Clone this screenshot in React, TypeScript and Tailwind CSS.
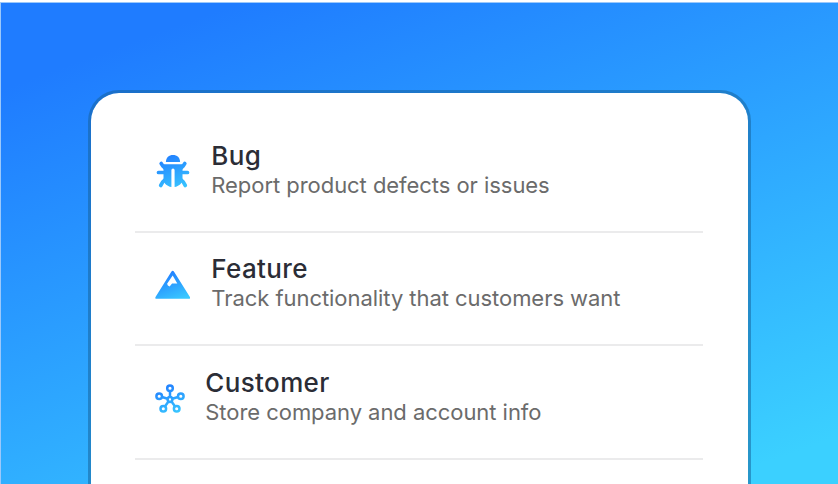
import type { ReactNode } from "react";

function BugIcon() {
  return (
    <svg width="34" height="36" viewBox="0 0 34 36" className="block shrink-0">
      <defs>
        <linearGradient id="bug" gradientUnits="userSpaceOnUse" x1="10" y1="2" x2="24" y2="38">
          <stop offset="0" stopColor="#217fff" />
          <stop offset="1" stopColor="#39c8ff" />
        </linearGradient>
      </defs>
      <path d="M9.900 9C10 4.500 13 2 17 2s7 2.500 7.100 7z" fill="url(#bug)" />
      <path d="M7.500 11.200h19V26.500c-.3 3.800-3.600 6.900-7.900 7.500V17.200q0-1.600-1.600-1.600t-1.600 1.600V34C11.100 33.400 7.800 30.300 7.500 26.500z" fill="url(#bug)" />
      <path d="M9 15 7 13.200 5.200 10.500M25 15 27 13.200l1.800-2.700M10 19.500H2.500M24 19.500h7.500M9.500 26.500l-2.700 2.300-2.100 3.700M24.500 26.500l2.700 2.300 2.100 3.700" fill="none" stroke="url(#bug)" strokeWidth="3.700" strokeLinecap="round" strokeLinejoin="round" />
    </svg>
  );
}

function FeatureIcon() {
  return (
    <svg width="36" height="30" viewBox="0 0 36 30" className="block shrink-0">
      <defs>
        <linearGradient id="feature" gradientUnits="userSpaceOnUse" x1="13" y1="2" x2="24" y2="30">
          <stop offset="0" stopColor="#217fff" />
          <stop offset="1" stopColor="#39c8ff" />
        </linearGradient>
      </defs>
      <path fillRule="evenodd" d="M16.500 1.400q1.200-1.400 2.400 0L34.900 27q.6 1.800-.9 1.800H1.400q-1.500 0-.9-1.800zM17.700 5.500l-5.600 8.300q.3 2.200 2.500 2.800l2.500-3.100h5.200z" fill="url(#feature)" />
    </svg>
  );
}

function CustomerIcon() {
  return (
    <svg width="30" height="30" viewBox="0 0 30 30" className="block shrink-0">
      <defs>
        <linearGradient id="customer" gradientUnits="userSpaceOnUse" x1="10" y1="1" x2="21" y2="30">
          <stop offset="0" stopColor="#217fff" />
          <stop offset="1" stopColor="#39c8ff" />
        </linearGradient>
      </defs>
      <g fill="none" stroke="url(#customer)" strokeWidth="2.500">
        <circle cx="15" cy="4.200" r="2.800" />
        <circle cx="4.200" cy="12.200" r="2.800" />
        <circle cx="25.800" cy="12.200" r="2.800" />
        <circle cx="8.300" cy="24.800" r="2.800" />
        <circle cx="21.700" cy="24.800" r="2.800" />
        <circle cx="15" cy="15.500" r="2.400" />
        <path d="M15.010 7 15 13.200M6.900 13 12.700 14.700M23.100 13 17.300 14.700M9.900 22.400 13.500 17.500M20.100 22.400 16.500 17.500" />
      </g>
    </svg>
  );
}

function Row({ icon, title, text }: { icon: ReactNode; title: string; text: string }) {
  return (
    <li className="h-[113.5px] border-b-2 border-[#ebebec] pl-5">
      <div className="flex items-start gap-[20.3px]">
        {icon}
        <div className="pt-[21.5px]">
          <h2 className="text-[26px] leading-[30px] font-medium tracking-[0.37px] text-[#2b2d36]">{title}</h2>
          <p className="text-[22px] leading-[28px] tracking-[-0.05px] whitespace-nowrap text-[#6b6b6b]">{text}</p>
        </div>
      </div>
    </li>
  );
}

export default function App() {
  return (
    <main className="h-[484px] w-[838px] overflow-hidden bg-white pt-0.5 font-['Inter',sans-serif]">
      <div className="h-[482px] border-t border-l border-[#9bc8fb] bg-[linear-gradient(160deg,#1f7cff_11%,#3bd0ff_94%)] pt-[87px] pl-[87px]">
        <section className="h-[430px] w-[662.5px] rounded-t-[31px] border-[3px] border-b-0 border-[#145f96]/50 bg-white bg-clip-padding pt-[26px] pr-[44.5px] pl-[44px]">
          <ul>
            <Row icon={<div className="px-px pt-[34px]"><BugIcon /></div>} title="Bug" text="Report product defects or issues" />
            <Row icon={<div className="pt-[37.5px]"><FeatureIcon /></div>} title="Feature" text="Track functionality that customers want" />
            <Row icon={<div className="pt-[37.5px]"><CustomerIcon /></div>} title="Customer" text="Store company and account info" />
          </ul>
        </section>
      </div>
    </main>
  );
}
